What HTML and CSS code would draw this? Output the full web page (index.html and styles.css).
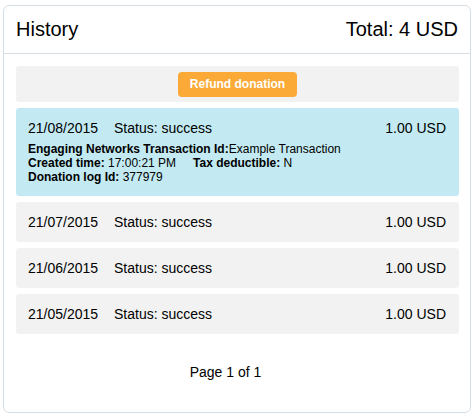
FILE: index.html
```html
<!DOCTYPE html>
<html>
<head>
<meta charset="utf-8">
<link rel="stylesheet" href="styles.css">
</head>
<body>
<div class="panel">
  <div class="panel-head">
    <span class="title">History</span>
    <span class="total">Total: 4 USD</span>
  </div>
  <div class="panel-body">
    <div class="refund-bar"><button class="refund-btn">Refund donation</button></div>
    <div class="row selected">
      <div class="row-main">
        <span class="date">21/08/2015</span>
        <span class="status">Status: success</span>
        <span class="amount">1.00 USD</span>
      </div>
      <div class="details">
        <div><b>Engaging Networks Transaction Id:</b>Example Transaction</div>
        <div><b>Created time:</b> 17:00:21 PM<span class="sep"></span><b>Tax deductible:</b> N</div>
        <div><b>Donation log Id:</b> 377979</div>
      </div>
    </div>
    <div class="row">
      <div class="row-main">
        <span class="date">21/07/2015</span>
        <span class="status">Status: success</span>
        <span class="amount">1.00 USD</span>
      </div>
    </div>
    <div class="row">
      <div class="row-main">
        <span class="date">21/06/2015</span>
        <span class="status">Status: success</span>
        <span class="amount">1.00 USD</span>
      </div>
    </div>
    <div class="row">
      <div class="row-main">
        <span class="date">21/05/2015</span>
        <span class="status">Status: success</span>
        <span class="amount">1.00 USD</span>
      </div>
    </div>
    <div class="pager">Page 1 of 1</div>
  </div>
</div>
</body>
</html>
```
FILE: styles.css
```css
html, body {
  margin: 0;
  padding: 0;
  background: #fff;
}
body {
  font-family: "Liberation Sans", Arial, sans-serif;
  color: #000;
}
.panel {
  margin: 5px 0 0 3px;
  width: 466px;
  border: 1px solid #d5dee5;
  border-radius: 6px;
}
.panel-head {
  display: flex;
  justify-content: space-between;
  padding: 12px 12px;
  font-size: 20px;
  line-height: 23px;
  border-bottom: 1px solid #d5dee5;
}
.panel-body {
  padding: 12px 11px 12px 12px;
  display: flex;
  flex-direction: column;
  gap: 6px;
}
.refund-bar {
  background: #f2f2f2;
  border-radius: 3px;
  height: 36px;
  display: flex;
  align-items: center;
  justify-content: center;
}
.refund-btn {
  background: #fbaa38;
  color: #fff;
  border: none;
  border-radius: 4px;
  font-family: "Liberation Sans", Arial, sans-serif;
  font-weight: bold;
  font-size: 12px;
  width: 119px;
  height: 25px;
  padding: 0;
}
.row {
  background: #f2f2f2;
  border-radius: 3px;
  padding: 12px 13px 12px 12px;
}
.row.selected {
  background: #c3eaf2;
}
.row-main {
  display: flex;
  font-size: 14px;
  line-height: 16px;
}
.date {
  width: 86px;
}
.status {
  flex: 1;
}
.details {
  margin-top: 6px;
  font-size: 12px;
  line-height: 14px;
}
.sep {
  display: inline-block;
  width: 17px;
}
.pager {
  padding: 24px 24px 20px 0;
  text-align: center;
  font-size: 14px;
  line-height: 16px;
}
```
